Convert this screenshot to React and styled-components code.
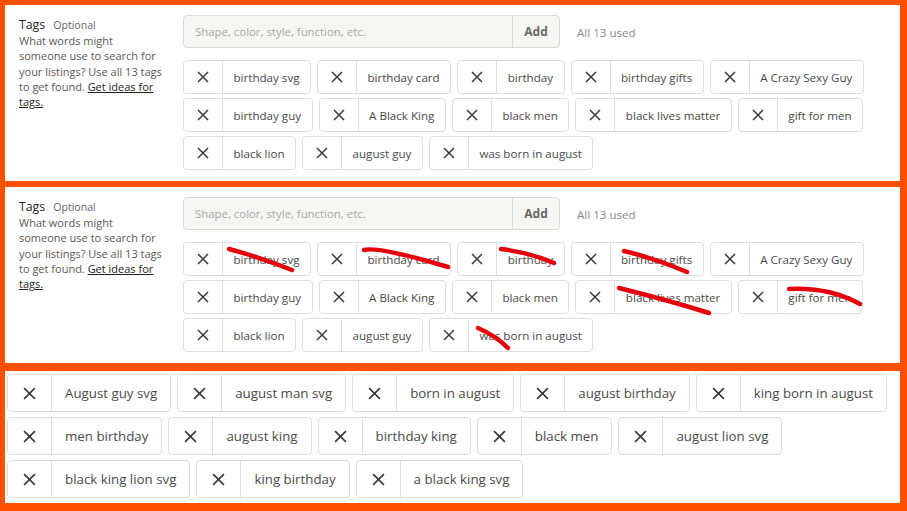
import React from 'react'
import styled, { createGlobalStyle } from 'styled-components'

const Global = createGlobalStyle`
  html, body {
    margin: 0;
    padding: 0;
    background: #ff4f00;
    font-family: "Open Sans", "Liberation Sans", sans-serif;
  }
`

const Page = styled.div`
  display: flex;
  flex-direction: column;
  padding: 5px 7px 8px 5px;
  width: 907px;
  height: 511px;
  box-sizing: border-box;
`

const Panel = styled.section`
  background: #fff;
  box-sizing: border-box;
  height: ${props => props.h}px;
  margin-bottom: ${props => props.gap || 0}px;
  padding: ${props => props.compact ? '3px 2px' : '10px 14px'};
  display: flex;
`

const Side = styled.div`
  width: 164px;
  flex-shrink: 0;
  box-sizing: border-box;
`

const Desc = styled.p`
  margin: 0;
  color: #595959;
  font-size: 11px;
  line-height: 15.3px;
  white-space: nowrap;
  a {
    color: #222;
    text-decoration: underline;
  }
`

const Heading = styled.div`
  display: flex;
  align-items: baseline;
  gap: 8px;
  margin-top: 2px;
  line-height: 16px;
  span:first-child {
    color: #222;
    font-size: 12.3px;
  }
  span:last-child {
    color: #666;
    font-size: 10.6px;
  }
`

const Main = styled.div`
  display: flex;
  flex-direction: column;
  flex: 1;
`

const InputRow = styled.div`
  display: flex;
  align-items: center;
  margin-bottom: 12px;
`

const Field = styled.div`
  display: flex;
  width: 377px;
  height: 33px;
  border: 1px solid #dcdad5;
  border-radius: 4px;
  background: #f7f6f3;
  box-sizing: border-box;
  overflow: hidden;
`

const Placeholder = styled.div`
  flex: 1;
  display: flex;
  align-items: center;
  padding-left: 11px;
  color: #a9a8a4;
  font-size: 11.4px;
`

const AddBtn = styled.div`
  width: 46px;
  display: flex;
  align-items: center;
  justify-content: center;
  border-left: 1px solid #dcdad5;
  font-weight: 700;
  font-size: 12px;
  color: #666;
`

const Used = styled.div`
  margin-left: 17px;
  padding-top: 1px;
  color: #8a8a8a;
  font-size: 11.6px;
`

const Rows = styled.div`
  display: flex;
  flex-direction: column;
  gap: ${props => props.big ? 5 : 4}px;
`

const Row = styled.div`
  display: flex;
  gap: 6px;
`

const Tag = styled.div`
  position: relative;
  display: flex;
  height: ${props => props.big ? 38 : 34}px;
  border: 1px solid #dedede;
  border-radius: 4px;
  box-sizing: border-box;
  background: #fff;
  color: #4a4a4a;
  font-size: ${props => props.big ? 13.3 : 11.6}px;
`

const Remove = styled.div`
  width: ${props => props.big ? 43 : 38}px;
  display: flex;
  align-items: center;
  justify-content: center;
  border-right: 1px solid #dedede;
  color: #3a3a3a;
`

const Label = styled.div`
  display: flex;
  align-items: center;
  padding: 0 ${props => props.big ? 13 : 10.5}px;
  white-space: nowrap;
`

const Strike = styled.svg`
  position: absolute;
  left: 0;
  top: 0;
  width: 100%;
  height: 100%;
  overflow: visible;
  pointer-events: none;
`

const Cross = ({ size }) => (
  <svg width={size} height={size} viewBox="0 0 12 12">
    <path d="M1 1 L11 11 M11 1 L1 11" stroke="currentColor" strokeWidth="1.5" fill="none" />
  </svg>
)

const listRows = [
  ['birthday svg', 'birthday card', 'birthday', 'birthday gifts', 'A Crazy Sexy Guy'],
  ['birthday guy', 'A Black King', 'black men', 'black lives matter', 'gift for men'],
  ['black lion', 'august guy', 'was born in august'],
]

// red marks drawn over some tags in the second copy
const marks = {
  'birthday svg': 'M45 6 Q75 14 108 27',
  'birthday card': 'M46 7 Q60 3 130 24',
  'birthday': 'M43 6 Q70 9 96 20',
  'birthday gifts': 'M52 8 Q85 16 115 29',
  'black lives matter': 'M43 7 Q95 20 133 32',
  'gift for men': 'M50 8 Q90 6 121 23',
  'was born in august': 'M48 9 Q66 17 78 29',
}

const bigRows = [
  ['August guy svg', 'august man svg', 'born in august', 'august birthday', 'king born in august'],
  ['men birthday', 'august king', 'birthday king', 'black men', 'august lion svg'],
  ['black king lion svg', 'king birthday', 'a black king svg'],
]

function TagChip({ text, big, mark }) {
  return (
    <Tag big={big}>
      <Remove big={big}><Cross size={big ? 13 : 12} /></Remove>
      <Label big={big}>{text}</Label>
      {mark && (
        <Strike>
          <path d={mark} stroke="#e6000a" strokeWidth="4.5" strokeLinecap="round" fill="none" />
        </Strike>
      )}
    </Tag>
  )
}

function TagsPanel({ marked, gap }) {
  return (
    <Panel h={176} gap={gap}>
      <Side>
        <Heading><span>Tags</span><span>Optional</span></Heading>
        <Desc>
          What words might<br />
          someone use to search for<br />
          your listings? Use all 13 tags<br />
          to get found. <a>Get ideas for</a><br />
          <a>tags.</a>
        </Desc>
      </Side>
      <Main>
        <InputRow>
          <Field>
            <Placeholder>Shape, color, style, function, etc.</Placeholder>
            <AddBtn>Add</AddBtn>
          </Field>
          <Used>All 13 used</Used>
        </InputRow>
        <Rows>
          {listRows.map((row, i) => (
            <Row key={i}>
              {row.map(t => (
                <TagChip key={t} text={t} mark={marked ? marks[t] : null} />
              ))}
            </Row>
          ))}
        </Rows>
      </Main>
    </Panel>
  )
}

export default function App() {
  return (
    <Page>
      <Global />
      <TagsPanel gap={6} />
      <TagsPanel marked gap={8} />
      <Panel h={132} compact>
        <Rows big>
          {bigRows.map((row, i) => (
            <Row key={i}>
              {row.map(t => <TagChip key={t} text={t} big />)}
            </Row>
          ))}
        </Rows>
      </Panel>
    </Page>
  )
}
